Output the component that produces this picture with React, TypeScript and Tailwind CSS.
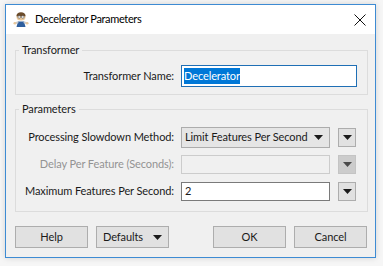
import type { ReactNode } from "react";

const font = { fontFamily: 'Lato, "Noto Sans", Arial, sans-serif' };
const txt = "text-[11px] tracking-[-0.1px]";

function Caret({ className = "" }: { className?: string }) {
  return (
    <svg width="9" height="5" viewBox="0 0 9 5" className={className} aria-hidden>
      <path d="M0 0h9L4.5 5z" fill="currentColor" />
    </svg>
  );
}

function AppIcon() {
  return (
    <svg width="16" height="16" viewBox="0 0 16 16" aria-hidden>
      <ellipse cx="8" cy="5" rx="4.5" ry="3.6" fill="#e9c79a" />
      <path d="M3.4 4.2c0-2.6 2-4 4.6-4s4.6 1.4 4.6 4H3.4z" fill="#6b4b2a" />
      <circle cx="6.2" cy="5" r="1.3" fill="#fff" stroke="#555" strokeWidth="0.6" />
      <circle cx="9.8" cy="5" r="1.3" fill="#fff" stroke="#555" strokeWidth="0.6" />
      <path d="M5 9.5h6l1.5 5.5h-9z" fill="#2f5f9e" />
      <path d="M1.5 10.5l3.5-1.2 0.6 1.6-3.4 1.4z" fill="#c9c9c9" />
      <path d="M14.5 10.5l-3.5-1.2-0.6 1.6 3.4 1.4z" fill="#c9c9c9" />
      <circle cx="1.8" cy="11.3" r="1.3" fill="#e9c79a" />
      <circle cx="14.2" cy="11.3" r="1.3" fill="#e9c79a" />
    </svg>
  );
}

function Group({ title, children, className = "" }: { title: string; children: ReactNode; className?: string }) {
  return (
    <fieldset className={"mx-0 border border-[#dcdcdc] " + className}>
      <legend className={"ml-[3px] px-[3px] leading-[14px] text-[#1a1a1a] " + txt}>{title}</legend>
      {children}
    </fieldset>
  );
}

function Row({ label, disabled, children }: { label: string; disabled?: boolean; children: ReactNode }) {
  return (
    <div className="flex h-[27px] items-center">
      <span
        className={
          "w-[158px] shrink-0 whitespace-nowrap text-right " +
          txt +
          (disabled ? " text-[#939393]" : " text-[#1a1a1a]")
        }
      >
        {label}
      </span>
      <div className="ml-[7px] flex items-center">{children}</div>
    </div>
  );
}

function SideButton({ disabled }: { disabled?: boolean }) {
  return (
    <div
      className={
        "ml-[8px] flex h-[19px] w-[18px] items-center justify-center border " +
        (disabled ? "border-[#c4c4c4] bg-[#cccccc] text-[#4a4a4a]" : "border-[#adadad] bg-[#e1e1e1] text-[#1a1a1a]")
      }
    >
      <Caret />
    </div>
  );
}

function PushButton({ children }: { children: ReactNode }) {
  return (
    <div
      className={
        "flex h-[22px] w-[73px] items-center justify-center whitespace-nowrap border border-[#adadad] bg-[#e1e1e1] text-[#1a1a1a] " +
        txt
      }
    >
      {children}
    </div>
  );
}

export default function App() {
  return (
    <div className="h-[266px] w-[383px] overflow-hidden bg-[#f6f6f6] pl-[5px] pt-[4px]" style={font}>
      <div className="flex h-[254px] w-[371px] flex-col border border-[#3d8bd3] bg-[#f0f0f0] shadow-[0_0_6px_rgba(0,0,0,0.15)]">
        <div className="flex h-[29px] items-center bg-white pl-[7px] pr-[8px]">
          <AppIcon />
          <span className="ml-[6px] whitespace-nowrap text-[11px] tracking-[-0.35px] text-black">
            Decelerator Parameters
          </span>
          <svg className="ml-auto mr-[1px]" width="12" height="12" viewBox="0 0 12 12" aria-hidden>
            <path d="M0.5 0.5l11 11M11.5 0.5l-11 11" stroke="#111" strokeWidth="1" />
          </svg>
        </div>

        <div className="flex flex-1 flex-col pl-[9px] pr-[7px]">
          <Group title="Transformer" className="mt-[9px] pb-[7px] pt-[8px]">
            <div className="flex h-[22px] items-center">
              <span className={"w-[158px] shrink-0 whitespace-nowrap text-right text-[#1a1a1a] " + txt}>
                Transformer Name:
              </span>
              <div className="ml-[7px] flex h-[22px] w-[176px] items-center border border-[#1f6fb5] bg-white pl-[2px]">
                <span className={"bg-[#0078d7] leading-[16px] text-white " + txt}>Decelerator</span>
              </div>
            </div>
          </Group>

          <Group title="Parameters" className="mt-[7px] pb-[6px] pt-[8px]">
            <Row label="Processing Slowdown Method:">
              <div
                className={
                  "flex h-[21px] w-[149px] items-center justify-between whitespace-nowrap border border-[#acacac] bg-[#e5e5e5] pl-[3px] pr-[6px] text-[#1a1a1a] " +
                  txt
                }
              >
                <span>Limit Features Per Second</span>
                <Caret />
              </div>
              <SideButton />
            </Row>
            <Row label="Delay Per Feature (Seconds):" disabled>
              <div className="h-[19px] w-[149px] border border-[#cccccc] bg-[#f0f0f0]" />
              <SideButton disabled />
            </Row>
            <Row label="Maximum Features Per Second:">
              <div
                className={
                  "flex h-[19px] w-[149px] items-center border border-[#7a7a7a] bg-white pl-[3px] text-[#1a1a1a] " + txt
                }
              >
                2
              </div>
              <SideButton />
            </Row>
          </Group>

          <div className="mt-[14px] flex justify-between pr-[1px]">
            <div className="flex gap-[8px]">
              <PushButton>Help</PushButton>
              <PushButton>
                <span className="mr-[10px]">Defaults</span>
                <Caret />
              </PushButton>
            </div>
            <div className="flex gap-[8px]">
              <PushButton>OK</PushButton>
              <PushButton>Cancel</PushButton>
            </div>
          </div>
        </div>
      </div>
    </div>
  );
}
